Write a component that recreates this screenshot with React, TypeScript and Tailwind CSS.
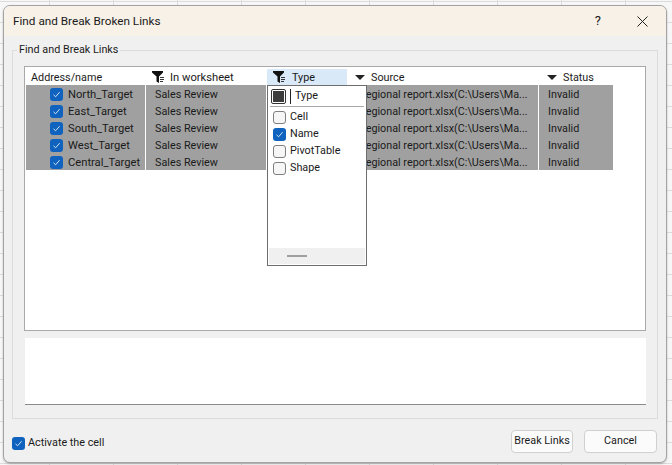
import React from 'react';

const font = { fontFamily: 'Roboto, sans-serif' };

const rows = ['North_Target', 'East_Target', 'South_Target', 'West_Target', 'Central_Target'];
const types = [
  { label: 'Cell', checked: false },
  { label: 'Name', checked: true },
  { label: 'PivotTable', checked: false },
  { label: 'Shape', checked: false },
];

const Check = ({ checked = true }: { checked?: boolean }) =>
  checked ? (
    <span className="flex h-[13px] w-[13px] shrink-0 items-center justify-center rounded-[3px] bg-[#0f62bd]">
      <svg width="9" height="9" viewBox="0 0 9 9" fill="none">
        <path d="M1.5 4.8 L3.6 6.8 L7.6 2.2" stroke="#cfe2f5" strokeWidth="1" />
      </svg>
    </span>
  ) : (
    <span className="h-[13px] w-[13px] shrink-0 rounded-[3px] border border-[#7f7f7f] bg-[#f6f6f6]" />
  );

const FilterIcon = () => (
  <svg width="13" height="12" viewBox="0 0 13 12" className="shrink-0">
    <path d="M0 0 H11 V1.5 L7 5.5 V12 L4.5 10.5 V5.5 L0 1.5 Z" fill="#111" />
    <path d="M8 6.5 H12 M8 8.5 H12 M8 10.5 H11" stroke="#333" strokeWidth="1" />
  </svg>
);

const SortIcon = () => (
  <svg width="10" height="5" viewBox="0 0 10 5" className="shrink-0">
    <path d="M0 0 H10 L5 5 Z" fill="#222" />
  </svg>
);

const App: React.FC = () => {
  return (
    <div
      style={font}
      className="h-[465px] w-[672px] overflow-hidden bg-[#f7f7f7] bg-[linear-gradient(#dcdcdc_1px,transparent_1px),linear-gradient(90deg,#dcdcdc_1px,transparent_1px)] bg-[size:64px_21px] bg-[position:49px_1px] pb-[2px] pl-[3px] pr-[5px] pt-[5px] text-[10.8px] text-[#1a1a1a]"
    >
      <div className="flex h-[458px] flex-col overflow-hidden rounded-[7px] border border-[#a3a3a3] bg-[#f0f0f0] shadow-[0_1px_2px_rgba(0,0,0,0.25)]">
        <div className="flex h-[30px] shrink-0 items-center bg-[#f8f1e8] pl-[9px]">
          <span className="flex-1 pt-px text-[11.75px]">Find and Break Broken Links</span>
          <span className="mr-[36px] text-[13px]">?</span>
          <svg width="11" height="11" viewBox="0 0 11 11" className="mr-[18px]">
            <path d="M0.5 0.5 L10.5 10.5 M10.5 0.5 L0.5 10.5" stroke="#222" strokeWidth="1" />
          </svg>
        </div>

        <fieldset className="mx-[8px] mt-[7px] h-[376px] shrink-0 border border-[#dcdcdc] px-[11px] pb-[14px]">
          <legend className="ml-[-7px] px-[2px] leading-[14px]">Find and Break Links</legend>

          <div className="relative mt-[9px] h-[265px] border border-[#a9a9a9] bg-white p-px">
            <div className="flex h-[17px] items-center gap-px pt-px leading-[17px]">
              <div className="w-[119px] pl-[5px]">Address/name</div>
              <div className="flex w-[120px] items-center gap-[5px] pl-[6px]">
                <FilterIcon />
                <span className="text-[11.2px]">In worksheet</span>
              </div>
              <div className="flex w-[80px] items-center gap-[6px] bg-[#d9e9f7] pl-[6px]">
                <FilterIcon />
                <span>Type</span>
              </div>
              <div className="flex w-[191px] items-center gap-[6px] pl-[7px]">
                <SortIcon />
                <span>Source</span>
              </div>
              <div className="flex w-[74px] items-center gap-[6px] pl-[7px]">
                <SortIcon />
                <span>Status</span>
              </div>
            </div>

            {rows.map((name) => (
              <div key={name} className="flex h-[17px] items-center gap-px leading-[19px]">
                <div className="flex h-full w-[119px] items-center gap-[5px] bg-[#a0a0a0] pl-[24px] pt-[2px]">
                  <Check />
                  <span className="text-[11.2px]">{name}</span>
                </div>
                <div className="h-full w-[120px] bg-[#a0a0a0] pl-[9px]">Sales Review</div>
                <div className="h-full w-[271px] bg-[#a0a0a0] pl-[92px]">
                  Regional report.xlsx(C:\Users\Ma...
                </div>
                <div className="h-full w-[74px] bg-[#a0a0a0] pl-[9px]">Invalid</div>
              </div>
            ))}

            <div className="absolute left-[242px] top-[18px] flex h-[181px] w-[100px] flex-col border border-[#6e6e6e] bg-white">
              <div className="mx-[2px] flex h-[21px] items-center gap-[4px] border-b border-[#a8a8a8] pl-px pt-px">
                <span className="flex h-[15px] w-[15px] items-center justify-center rounded-[2px] border border-[#333]">
                  <span className="h-[11px] w-[11px] bg-[#3c3c3c]" />
                </span>
                <span className="h-[15px] w-px bg-[#222]" />
                <span>Type</span>
              </div>
              <div className="flex-1 pl-[5px] pt-[2px]">
                {types.map((t) => (
                  <div key={t.label} className="flex h-[17px] items-center gap-[4px]">
                    <Check checked={t.checked} />
                    <span>{t.label}</span>
                  </div>
                ))}
              </div>
              <div className="mx-px mb-px flex h-[16px] items-center bg-[#f0f0f0] pl-[18px]">
                <span className="h-[2px] w-[20px] bg-[#a0a0a0]" />
              </div>
            </div>
          </div>

          <div className="ml-px mt-[7px] h-[67px] border-b border-[#8a8a8a] bg-white" />
        </fieldset>

        <div className="flex flex-1 items-center pl-[8px] pr-[9px] pt-[5px]">
          <Check />
          <span className="ml-[3px] flex-1">Activate the cell</span>
          <button className="mb-[3px] h-[23px] w-[62px] rounded-[4px] border border-[#d0d0d0] bg-[#fbfbfb]">Break Links</button>
          <button className="mb-[3px] ml-[11px] h-[23px] w-[73px] rounded-[4px] border border-[#d0d0d0] bg-[#fbfbfb]">Cancel</button>
        </div>
      </div>
    </div>
  );
};

export default App;
